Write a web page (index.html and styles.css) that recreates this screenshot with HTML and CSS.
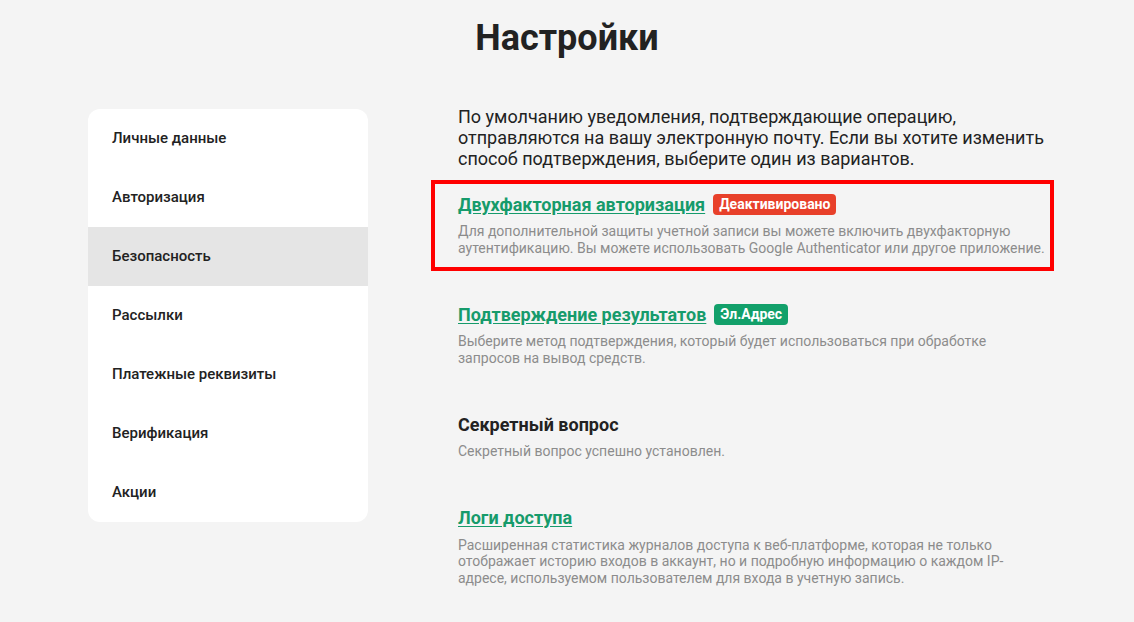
FILE: index.html
```html
<!DOCTYPE html>
<html lang="ru">
<head>
    <meta charset="UTF-8">
    <meta name="viewport" content="width=device-width, initial-scale=1.0">
    <title>Настройки</title>
    <link rel="stylesheet" href="styles.css">
</head>
<body>

<h1 class="page-title">Настройки</h1>

<div class="settings">
    <!-- Side menu -->
    <nav class="side-menu">
        <a class="side-item" href="#">Личные данные</a>
        <a class="side-item" href="#">Авторизация</a>
        <a class="side-item active" href="#">Безопасность</a>
        <a class="side-item" href="#">Рассылки</a>
        <a class="side-item" href="#">Платежные реквизиты</a>
        <a class="side-item" href="#">Верификация</a>
        <a class="side-item" href="#">Акции</a>
    </nav>

    <!-- Security options -->
    <div class="security">
        <p class="intro">По умолчанию уведомления, подтверждающие операцию, отправляются на вашу электронную почту. Если вы хотите изменить способ подтверждения, выберите один из вариантов.</p>

        <div class="option highlight">
            <div class="option-head">
                <a class="option-title" href="#">Двухфакторная авторизация</a>
                <span class="badge badge-off">Деактивировано</span>
            </div>
            <p class="option-text">Для дополнительной защиты учетной записи вы можете включить двухфакторную аутентификацию. Вы можете использовать Google Authenticator или другое приложение.</p>
        </div>

        <div class="option">
            <div class="option-head">
                <a class="option-title" href="#">Подтверждение результатов</a>
                <span class="badge badge-on">Эл.Адрес</span>
            </div>
            <p class="option-text">Выберите метод подтверждения, который будет использоваться при обработке запросов на вывод средств.</p>
        </div>

        <div class="option">
            <div class="option-head">
                <span class="option-title plain">Секретный вопрос</span>
            </div>
            <p class="option-text">Секретный вопрос успешно установлен.</p>
        </div>

        <div class="option">
            <div class="option-head">
                <a class="option-title" href="#">Логи доступа</a>
            </div>
            <p class="option-text">Расширенная статистика журналов доступа к веб-платформе, которая не только отображает историю входов в аккаунт, но и подробную информацию о каждом IP-адресе, используемом пользователем для входа в учетную запись.</p>
        </div>
    </div>
</div>

</body>
</html>
```

FILE: styles.css
```css
/* General */
body {
    font-family: Roboto, "Liberation Sans", Arial, sans-serif;
    margin: 0;
    padding: 0;
    background-color: #f4f4f4;
    color: #222;
}
.page-title {
    margin: 0;
    padding-top: 16px;
    font-size: 36px;
    line-height: 44px;
    font-weight: 700;
    text-align: center;
    color: #222;
}

/* Layout */
.settings {
    width: 958px;
    margin: 46px auto 0;
    display: grid;
    grid-template-columns: 280px 1fr;
    column-gap: 90px;
    align-items: start;
}

/* Side menu */
.side-menu {
    margin-top: 3px;
    background-color: #fff;
    border-radius: 12px;
    overflow: hidden;
    display: flex;
    flex-direction: column;
}
.side-item {
    height: 59px;
    display: flex;
    align-items: center;
    padding-left: 24px;
    padding-bottom: 1px;
    box-sizing: border-box;
    font-size: 15px;
    font-weight: 500;
    color: #222;
    text-decoration: none;
}
.side-item.active {
    background-color: #e5e5e5;
}

/* Content */
.security {
    display: flex;
    flex-direction: column;
    gap: 46px;
}
.intro {
    margin: 0 0 -23px;
    font-size: 18px;
    line-height: 21px;
    color: #222;
}
.option {
    display: flex;
    flex-direction: column;
    gap: 7px;
}
.option.highlight {
    border: 4px solid #ff0000;
    padding: 8px 4px 11px 23px;
    margin: -12px -8px -15px -27px;
}
.option-head {
    display: flex;
    align-items: center;
    gap: 8px;
    height: 24px;
}
.option-title {
    font-size: 18px;
    font-weight: 700;
    color: #169b6b;
    text-decoration: underline;
    text-underline-offset: 2px;
}
.option-title.plain {
    color: #222;
    text-decoration: none;
}
.badge {
    display: inline-flex;
    align-items: center;
    height: 21px;
    padding: 0 6px;
    border-radius: 4px;
    font-size: 14px;
    font-weight: 700;
    color: #fff;
}
.badge-off {
    background-color: #e8402a;
}
.badge-on {
    background-color: #12a06a;
}
.option-text {
    margin: 0;
    font-size: 14px;
    line-height: 16.5px;
    color: #8c8c8c;
}
```
